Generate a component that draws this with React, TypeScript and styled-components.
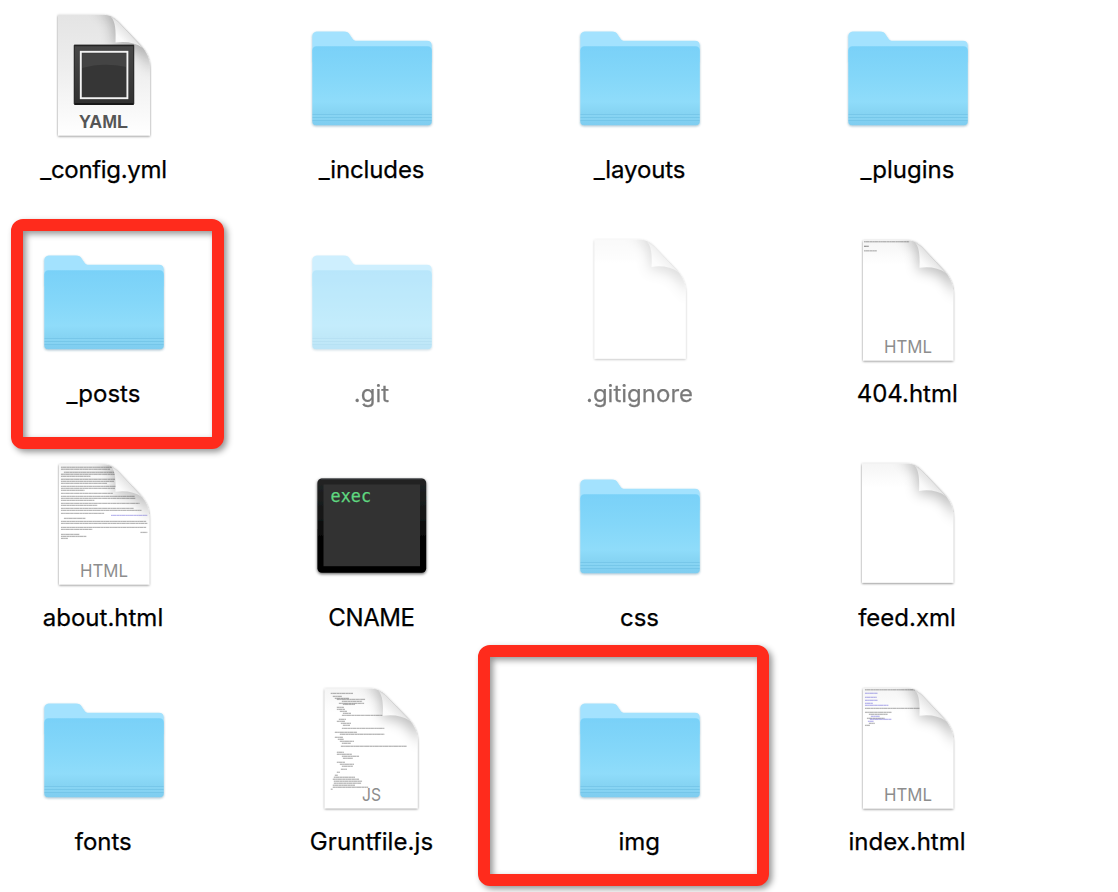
import React, { useId } from 'react';
import styled, { createGlobalStyle } from 'styled-components';

const GlobalStyle = createGlobalStyle`
  body { margin: 0; background: #fff; }
`;

const Window = styled.main`
  position: relative;
  width: 1118px;
  height: 892px;
  overflow: hidden;
  background: #fff;
  font-family: Inter, "Liberation Sans", sans-serif;
`;

const Files = styled.div`
  display: grid;
  grid-template-columns: repeat(4, 200px);
  grid-auto-rows: 224px;
  column-gap: 68px;
  padding: 12px 0 0 4px;
`;

const FileItem = styled.div<{ $hidden?: boolean }>`
  display: flex;
  flex-direction: column;
  align-items: center;
  opacity: ${(p) => (p.$hidden ? 0.52 : 1)};
`;

const Icon = styled.svg`
  display: block;
  width: 128px;
  height: 128px;
  overflow: visible;
`;

const Label = styled.span<{ $spacing: number; $shift: number }>`
  margin-top: 15px;
  padding-right: ${(p) => 1 - p.$shift}px;
  font-size: 24px;
  line-height: 30px;
  letter-spacing: ${(p) => p.$spacing}px;
  color: #000;
  -webkit-text-stroke: 0.25px #000;
  white-space: nowrap;
`;

const Highlight = styled.div<{ $x: number; $y: number; $w: number; $h: number }>`
  position: absolute;
  left: ${(p) => p.$x}px;
  top: ${(p) => p.$y}px;
  width: ${(p) => p.$w}px;
  height: ${(p) => p.$h}px;
  box-sizing: border-box;
  border: 12px solid #ff2b1c;
  border-radius: 12px;
  filter: drop-shadow(3px 3px 3px rgba(0, 0, 0, 0.42));
`;

function Folder() {
  const id = useId();
  return (
    <Icon viewBox="0 0 128 128">
      <defs>
        <linearGradient id={id + 'f'} x1="0" y1="0" x2="0" y2="1">
          <stop offset="0" stopColor="#79d1f8" />
          <stop offset="0.4" stopColor="#84d7f9" />
          <stop offset="0.7" stopColor="#8fdcfa" />
          <stop offset="0.84" stopColor="#86d4f3" />
          <stop offset="1" stopColor="#7fcdf0" />
        </linearGradient>
        <filter id={id + 's'} x="-10%" y="-10%" width="120%" height="125%">
          <feDropShadow dx="0" dy="1" stdDeviation="1" floodColor="#28627d" floodOpacity="0.42" />
        </filter>
      </defs>
      <g filter={`url(#${id}s)`}>
        <path d="M4.3 25C4.3 21 6.3 19.6 10 19.6H36C39 19.6 40.5 20.6 42 23L44.2 26.2C45.5 28.2 46.5 28.7 49 28.7H119C122.2 28.7 123.8 30.5 123.8 33.7V50H4.3Z" fill="#a3e2fe" />
        <path d="M4.3 38.5C4.3 35.8 5.8 34.2 8.5 34.2H119.5C122.3 34.2 123.8 35.8 123.8 38.5V109.5C123.8 112 122.5 113.3 120 113.3H8C5.5 113.3 4.3 112 4.3 109.5Z" fill={`url(#${id}f)`} />
      </g>
      <path d="M4.5 102.5H123.6M4.5 105.5H123.6M4.5 108.5H123.6" stroke="#6cbfe3" strokeWidth="1.1" opacity="0.55" />
      <path d="M4.5 104H123.6M4.5 107H123.6" stroke="#9ddff7" strokeWidth="0.8" opacity="0.4" />
    </Icon>
  );
}

const SHEET = 'M0 0H44C52 0 55.5 2.5 60 6.7L82 29.5C89 37 92 44 92 54V120H0Z';

// Each row of miniature page text: x, y, length, optional colour.
type Line = [number, number, number, string?];

const BLUE = '#5d55d8';

const aboutLines: Line[] = [
  [2, 3, 53], [2, 5, 50], [5, 8, 52], [2, 10, 56], [2, 12, 30],
  [2, 15, 55], [2, 17, 54], [2, 19, 47], [2, 22, 57], [2, 24, 55], [2, 26, 24],
  [2, 29, 53], [2, 32, 75], [2, 34, 76], [2, 36, 34], [2, 39, 80], [2, 41, 37],
  [2, 44, 74], [2, 46, 82], [2, 49, 44], [53, 51, 37, BLUE], [5, 54, 22],
  [2, 57, 87], [2, 59, 88], [2, 63, 87], [2, 65, 32], [83, 68, 7],
  [2, 70, 19], [2, 72, 26], [2, 74, 7],
];

const gruntLines: Line[] = [
  [6, 5, 22], [8, 8, 9], [10, 10, 14], [12, 11, 28], [17, 13, 20], [14, 15, 25],
  [18, 16, 12], [12, 19, 7], [12, 21, 8], [15, 23, 7], [18, 25, 8], [17, 27, 40],
  [14, 31, 7], [12, 33, 8], [16, 35, 10], [18, 37, 7], [17, 40, 42],
  [10, 44, 22], [15, 46, 44], [10, 49, 8], [13, 51, 6], [15, 53, 14],
  [17, 55, 9], [16, 58, 65], [12, 64, 7], [12, 66, 15], [17, 68, 17],
  [18, 70, 10], [12, 74, 8], [15, 76, 14], [17, 78, 11], [16, 81, 6],
  [12, 84, 3], [10, 87, 3], [9, 89, 21], [8, 91, 26], [9, 93, 28],
  [9, 95, 27], [8, 97, 22], [8, 99, 35], [6, 101, 2],
];

const indexLines: Line[] = [
  [2, 1.5, 51], [2, 5, 13, BLUE], [2, 9, 12, BLUE], [2, 12, 13, BLUE], [2, 15, 8, BLUE],
  [2, 17, 24, BLUE], [2, 20, 56], [2, 24, 27], [6, 26, 19], [8, 28, 9, BLUE],
  [4, 30, 18], [7, 31, 22, BLUE], [5, 33, 6, BLUE], [6, 35, 6], [2, 37, 5],
];

interface SheetProps {
  kind?: string;
  lines?: Line[];
  x?: number;
  y?: number;
  w?: number;
  h?: number;
  kindX?: number;
  yaml?: boolean;
}

function Document({ kind, lines = [], x = 19, y = 4.3, w = 90.3, h = 120.2, kindX = 69, yaml }: SheetProps) {
  const id = useId();
  return (
    <Icon viewBox="0 0 128 128">
      <defs>
        <linearGradient id={id + 'p'} x1="0" y1="0" x2="0" y2="1">
          <stop offset="0" stopColor={yaml ? '#e4e4e4' : '#f5f5f5'} />
          <stop offset={yaml ? '.45' : '.2'} stopColor={yaml ? '#eeeeee' : '#fff'} />
          <stop offset="1" stopColor="#fff" />
        </linearGradient>
        <linearGradient id={id + 'f'} x1="0" y1="1" x2="0.5" y2="0.5">
          <stop offset="0" stopColor="#fff" />
          <stop offset="0.6" stopColor="#fafafa" />
          <stop offset="1" stopColor="#e6e6e6" />
        </linearGradient>
        <linearGradient id={id + 'k'} x1="0" y1="0" x2="0" y2="1">
          <stop offset="0" stopColor="#484848" />
          <stop offset="1" stopColor="#303030" />
        </linearGradient>
        <clipPath id={id + 'c'}><path d={SHEET} /></clipPath>
        <filter id={id + 's'} x="-10%" y="-10%" width="120%" height="120%">
          <feDropShadow dx="0" dy="0.8" stdDeviation="1.3" floodOpacity="0.5" />
        </filter>
        <filter id={id + 'b'} x="-60%" y="-60%" width="220%" height="220%">
          <feGaussianBlur stdDeviation="6.5" />
        </filter>
      </defs>
      <g transform={`translate(${x} ${y}) scale(${w / 92} ${h / 120})`}>
        <path d={SHEET} fill={`url(#${id}p)`} filter={`url(#${id}s)`} />
        <g clipPath={`url(#${id}c)`}>
          {lines.map(([lx, ly, length, color], i) => (
            <g key={i} stroke={color || '#555'}>
              <path d={`M${lx} ${ly}h${length}`} strokeWidth="1.4" opacity="0.2" />
              <path
                d={`M${lx} ${ly}h${length}`}
                strokeWidth="0.9"
                strokeDasharray={i % 2 ? '2.8 .5 1.3 .3 4 .6' : '1.7 .3 3.5 .6 2.2 .4'}
                opacity="0.35"
              />
            </g>
          ))}
          <path d="M36 -6C55 1 56 13 56 31C72 28 86 38 96 58V16L70 -8Z" fill="#000" opacity="0.25" filter={`url(#${id}b)`} />
        </g>
        <path d="M53 2C57.5 7 58 16 57.5 27.5C68 26 77 27.5 85 33L60 6.7C57.5 4.3 55 2.5 53 2Z" fill={`url(#${id}f)`} />
        <path d="M54 2.8L60 6.7L84 31.8" fill="none" stroke="#cfcfcf" strokeWidth="0.6" />
      </g>
      {yaml && (
        <g>
          <rect x="33.8" y="32.8" width="60.4" height="60" rx="1" fill={`url(#${id}k)`} />
          <path d="M34 33.5H94" stroke="#242424" strokeWidth="1.4" />
          <path d="M34.5 92H93.6" stroke="#181818" strokeWidth="1.8" />
          <path d="M34.4 33V92M93.6 33V92" stroke="#2b2b2b" strokeWidth="1" />
          <rect x="40.8" y="39.8" width="46.6" height="46.4" fill="#363636" stroke="#f3f3f3" strokeWidth="1.9" />
          <path d="M42.2 41.2H86V55C70 51.5 56 52 42.2 56Z" fill="#444444" />
        </g>
      )}
      {kind && (
        <text
          x={kindX}
          y={yaml ? 116.2 : 117}
          textAnchor="middle"
          fontFamily={yaml ? 'Liberation Sans, sans-serif' : 'Inter, sans-serif'}
          fontSize={yaml ? 18.4 : 17.8}
          fontWeight={yaml ? 700 : 400}
          textLength={yaml ? 49 : kind === 'HTML' ? 48 : 19}
          lengthAdjust="spacingAndGlyphs"
          fill={yaml ? '#555' : '#8d8d8d'}
        >
          {kind}
        </text>
      )}
    </Icon>
  );
}

function Executable() {
  const id = useId();
  return (
    <Icon viewBox="0 0 128 128">
      <defs>
        <linearGradient id={id + 'e'} x1="0" y1="0" x2="0" y2="1">
          <stop offset="0" stopColor="#222425" />
          <stop offset="0.4" stopColor="#141515" />
          <stop offset="0.7" stopColor="#000" />
        </linearGradient>
        <filter id={id + 's'} x="-10%" y="-10%" width="120%" height="125%">
          <feDropShadow dx="0" dy="1.2" stdDeviation="1.5" floodOpacity="0.65" />
        </filter>
      </defs>
      <rect x="9.4" y="18.4" width="108.8" height="94.4" rx="4.5" fill={`url(#${id}e)`} filter={`url(#${id}s)`} />
      <path d="M13 18.9H114.5" stroke="#55595b" strokeWidth="0.7" />
      <rect x="15.5" y="24.5" width="96.5" height="81.7" fill="#323232" />
      <text x="22.6" y="41.5" fontFamily="DejaVu Sans Mono, monospace" fontSize="16.8" textLength="40.4" fill="#5fd880" stroke="#5fd880" strokeWidth="0.25">exec</text>
    </Icon>
  );
}

interface Entry {
  name: string;
  icon: React.ReactNode;
  hidden?: boolean;
  spacing?: number;
  shift?: number;
}

const entries: Entry[] = [
  { name: '_config.yml', spacing: -0.32, icon: <Document yaml kind="YAML" x={18} y={2.8} w={92} h={120.6} kindX={63.5} /> },
  { name: '_includes', spacing: -0.12, icon: <Folder /> },
  { name: '_layouts', spacing: -0.12, icon: <Folder /> },
  { name: '_plugins', icon: <Folder /> },
  { name: '_posts', icon: <Folder /> },
  { name: '.git', icon: <Folder />, hidden: true },
  { name: '.gitignore', icon: <Document x={18.5} y={3.6} w={91.3} h={119.2} />, hidden: true },
  { name: '404.html', shift: -0.5, icon: <Document kind="HTML" kindX={64} lines={[[1, 1.4, 46], [1, 6, 5, '#111'], [1, 10.5, 13]]} /> },
  { name: 'about.html', shift: -1, icon: <Document kind="HTML" kindX={64} lines={aboutLines} /> },
  { name: 'CNAME', spacing: -0.4, icon: <Executable /> },
  { name: 'css', icon: <Folder /> },
  { name: 'feed.xml', shift: -1, icon: <Document x={18} y={3.6} w={91.3} h={119.2} /> },
  { name: 'fonts', shift: -0.5, icon: <Folder /> },
  { name: 'Gruntfile.js', spacing: 0.08, icon: <Document kind="JS" kindX={63.5} x={16.7} y={4.4} w={93} h={119.8} lines={gruntLines} /> },
  { name: 'img', shift: -0.5, icon: <Folder /> },
  { name: 'index.html', shift: -1, icon: <Document kind="HTML" kindX={64} lines={indexLines} /> },
];

export default function App() {
  return (
    <Window>
      <GlobalStyle />
      <Files>
        {entries.map((entry) => (
          <FileItem key={entry.name} $hidden={entry.hidden}>
            {entry.icon}
            <Label $spacing={entry.spacing ?? 0} $shift={entry.shift ?? 0}>{entry.name}</Label>
          </FileItem>
        ))}
      </Files>
      <Highlight $x={11} $y={219} $w={213} $h={230} />
      <Highlight $x={478} $y={645} $w={291} $h={241} />
    </Window>
  );
}
